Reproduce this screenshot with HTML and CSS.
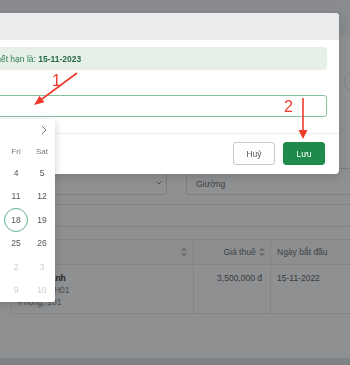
FILE: index.html
```html
<!DOCTYPE html>
<html lang="vi">
<head>
    <meta charset="UTF-8">
    <meta name="viewport" content="width=device-width, initial-scale=1.0">
    <title>Gia hạn hợp đồng</title>
    <link rel="stylesheet" href="styles.css">
</head>
<body>
    <div class="page">
        <header class="topbar"></header>

        <section class="page-head">
            <span class="round-btn"></span>
        </section>

        <div class="filters">
            <div class="select">
                <span class="select-value"></span>
                <svg class="caret" width="6" height="4" viewBox="0 0 6 4"><path d="M0.5 0.5 L3 3 L5.5 0.5" fill="none" stroke="#8c8c8c" stroke-width="1"/></svg>
            </div>
            <div class="text-input">Giường</div>
        </div>

        <div class="tabs"></div>

        <table class="grid">
            <thead>
                <tr>
                    <th class="col-name"><span class="sorter"><svg width="6" height="10" viewBox="0 0 6 10"><path d="M0 4 L3 0 L6 4 Z M0 6 L3 10 L6 6 Z" fill="#c4c4c4"/></svg></span></th>
                    <th class="col-price">Giá thuê <span class="sorter"><svg width="6" height="10" viewBox="0 0 6 10"><path d="M0 4 L3 0 L6 4 Z M0 6 L3 10 L6 6 Z" fill="#c4c4c4"/></svg></span></th>
                    <th class="col-date">Ngày bắt đầu</th>
                </tr>
            </thead>
            <tbody>
                <tr>
                    <td class="col-name">
                        <div class="guest-name">Trần Thanh</div>
                        <div class="muted">Tòa nhà: H01</div>
                        <div class="muted">Phòng: 101</div>
                    </td>
                    <td class="col-price">3,500,000 đ</td>
                    <td class="col-date">15-11-2022</td>
                </tr>
            </tbody>
        </table>

        <footer class="page-foot"></footer>
    </div>

    <div class="backdrop"></div>

    <div class="modal">
        <div class="modal-header">Gia hạn hợp đồng</div>
        <div class="modal-body">
            <div class="alert">Hợp đồng phòng hiện tại sẽ hết hạn là:&nbsp;<strong>15-11-2023</strong></div>

            <div class="form-item">
                <label class="form-label">Ngày kết thúc mới</label>
                <div class="picker">
                    <div class="date-input"><span class="placeholder">Chọn ngày</span></div>

                    <div class="calendar">
                        <div class="cal-head">
                            <svg width="6" height="10" viewBox="0 0 6 10"><path d="M5 1 L1 5 L5 9" fill="none" stroke="#777" stroke-width="1"/></svg>
                            <span class="cal-title">Tháng 11 2022</span>
                            <svg width="6" height="10" viewBox="0 0 6 10"><path d="M1 1 L5 5 L1 9" fill="none" stroke="#777" stroke-width="1"/></svg>
                        </div>
                        <div class="cal-weekdays">
                            <span>Sun</span><span>Mon</span><span>Tue</span><span>Wed</span><span>Thu</span><span>Fri</span><span>Sat</span>
                        </div>
                        <div class="cal-days" id="calDays"></div>
                    </div>
                </div>
            </div>
        </div>
        <div class="modal-footer">
            <button class="btn">Huỷ</button>
            <button class="btn btn-primary">Lưu</button>
        </div>
    </div>

    <svg class="notes" width="350" height="365" viewBox="0 0 350 365">
        <text x="52" y="86" class="note-num">1</text>
        <line x1="77" y1="73" x2="42" y2="99" stroke="#ef3b2c" stroke-width="1.6"/>
        <polygon points="34,105 44.4,102.2 39.6,95.8" fill="#ef3b2c"/>
        <text x="284" y="112" class="note-num">2</text>
        <line x1="303" y1="98" x2="303" y2="131" stroke="#ef3b2c" stroke-width="1.6"/>
        <polygon points="298.5,130 307.5,130 303,139" fill="#ef3b2c"/>
    </svg>

    <script>
        // November 2022, with the trailing days of October and December
        const days = [];
        [30, 31].forEach(d => days.push({ d, out: true }));
        for (let d = 1; d <= 30; d++) days.push({ d, out: false });
        for (let d = 1; d <= 10; d++) days.push({ d, out: true });

        const grid = document.getElementById('calDays');
        days.forEach(item => {
            const cell = document.createElement('span');
            cell.className = 'day' + (item.out ? ' day-out' : '');
            const num = document.createElement('span');
            num.className = 'day-num' + (!item.out && item.d === 18 ? ' day-selected' : '');
            num.textContent = item.d;
            cell.appendChild(num);
            grid.appendChild(cell);
        });
    </script>
</body>
</html>
```

FILE: styles.css
```css
html, body {
    margin: 0;
    padding: 0;
}
body {
    font-family: "Liberation Sans", Arial, sans-serif;
    font-size: 8.5px;
    color: #333;
    width: 350px;
    height: 365px;
    overflow: hidden;
    background-color: #fff;
}
.page {
    height: 365px;
    display: flex;
    flex-direction: column;
    overflow: hidden;
    background-color: #fdfdfd;
}
.topbar {
    height: 35px;
    flex-shrink: 0;
    background-color: #f4f5f6;
}
.page-head {
    height: 97px;
    padding-top: 36px;
    flex-shrink: 0;
    display: flex;
    justify-content: flex-end;
    align-items: flex-start;
}
.round-btn {
    width: 20px;
    height: 20px;
    margin-right: -16px;
    border-radius: 50%;
    border: 1px solid #e2e2e2;
    background-color: #fff;
}
.filters {
    display: flex;
    gap: 19px;
    padding-left: 11px;
    height: 27px;
    flex-shrink: 0;
}
.select {
    width: 156px;
    box-sizing: border-box;
    border: 1px solid #dcdcdc;
    border-radius: 3px;
    display: flex;
    align-items: center;
    justify-content: space-between;
    padding: 0 4px 0 8px;
}
.caret {
    margin-top: 3px;
}
.text-input {
    flex: 1;
    margin-right: -20px;
    box-sizing: border-box;
    border: 1px solid #dcdcdc;
    border-radius: 3px;
    display: flex;
    align-items: center;
    padding: 4px 0 0 9px;
    color: #707070;
    font-size: 8.5px;
}
.tabs {
    margin-top: 9px;
    height: 21px;
    flex-shrink: 0;
    border-top: 1px solid #e6e6e6;
    border-bottom: 1px solid #e6e6e6;
}
.grid {
    margin-top: 12px;
    margin-left: 11px;
    border-collapse: collapse;
    table-layout: fixed;
    width: 400px;
    flex-shrink: 0;
}
.grid th, .grid td {
    border: 1px solid #e8e8e8;
    padding: 0 6px;
    font-size: 8.5px;
}
.grid th {
    height: 24px;
    font-weight: normal;
    color: #707070;
    background-color: #fafafa;
}
.grid td {
    height: 49px;
    vertical-align: top;
    padding-top: 7px;
    line-height: 12px;
    color: #666;
    box-sizing: border-box;
}
.grid .col-name {
    width: 182px;
    box-sizing: border-box;
    text-align: right;
}
.grid td.col-name {
    text-align: left;
}
.grid .col-price {
    width: 77px;
    box-sizing: border-box;
    text-align: right;
    padding-right: 8px;
}
.grid th.col-price {
    padding-right: 5px;
}
.grid .col-date {
    text-align: left;
}
.sorter {
    display: inline-block;
    vertical-align: middle;
    margin-left: 1px;
}
.sorter svg {
    display: block;
}
.guest-name {
    font-weight: bold;
    color: #3a3a3a;
    padding-left: 2px;
}
.muted {
    color: #8a8a8a;
}
.page-foot {
    margin-top: auto;
    height: 7px;
    flex-shrink: 0;
    background-color: #e2e3e4;
}

/* modal */
.backdrop {
    position: fixed;
    inset: 0;
    background-color: rgba(6, 10, 15, 0.45);
    z-index: 10;
}
.modal {
    position: fixed;
    top: 13px;
    left: -139px;
    width: 478px;
    background-color: #fff;
    border-radius: 4px;
    box-shadow: 0 3px 10px rgba(0, 0, 0, 0.15);
    z-index: 20;
}
.modal-header {
    height: 27px;
    line-height: 27px;
    padding-left: 12px;
    background-color: #ebebeb;
    border-radius: 4px 4px 0 0;
    font-size: 10px;
    font-weight: bold;
    color: #333;
}
.modal-body {
    padding: 7px 12px 16px;
}
.alert {
    height: 23px;
    box-sizing: border-box;
    padding: 0 12px 0 16px;
    display: flex;
    align-items: center;
    background-color: #e6f0e9;
    border-radius: 3px;
    color: #2f7d50;
    white-space: nowrap;
}
.alert strong {
    color: #276b43;
}
.form-item {
    margin-top: 8px;
}
.form-label {
    display: block;
    line-height: 12px;
    margin-bottom: 5px;
    color: #333;
}
.picker {
    position: relative;
}
.date-input {
    height: 22px;
    box-sizing: border-box;
    border: 1px solid #86c49e;
    border-radius: 3px;
    display: flex;
    align-items: center;
    padding-left: 7px;
}
.placeholder {
    color: #b5b5b5;
}
.calendar {
    position: absolute;
    top: 24px;
    left: 0;
    width: 182px;
    background-color: #fff;
    border-radius: 2px;
    box-shadow: 0 2px 8px rgba(0, 0, 0, 0.18);
    z-index: 5;
}
.cal-head {
    height: 22px;
    display: flex;
    align-items: center;
    justify-content: space-between;
    padding: 0 8px;
}
.cal-head svg {
    display: block;
}
.cal-title {
    font-weight: bold;
    color: #333;
}
.cal-weekdays, .cal-days {
    display: grid;
    grid-template-columns: repeat(7, 26px);
}
.cal-weekdays span {
    height: 20px;
    line-height: 22px;
    text-align: center;
    font-size: 8px;
    color: #7a7a7a;
}
.day {
    height: 23.5px;
    display: flex;
    align-items: center;
    justify-content: center;
    color: #555;
}
.day-out {
    color: #c9ced4;
}
.day-num {
    width: 24px;
    height: 24px;
    box-sizing: border-box;
    display: flex;
    align-items: center;
    justify-content: center;
    border-radius: 50%;
}
.day-selected {
    border: 1px solid #56b383;
}
.modal-footer {
    border-top: 1px solid #ececec;
    padding: 8px 14px 9px;
    display: flex;
    justify-content: flex-end;
    gap: 8px;
}
.btn {
    width: 42px;
    height: 23px;
    font-family: "Liberation Sans", Arial, sans-serif;
    font-size: 8.5px;
    color: #555;
    background-color: #fff;
    border: 1px solid #c8c8c8;
    border-radius: 3px;
    padding: 0;
    cursor: pointer;
}
.btn-primary {
    color: #fff;
    background-color: #1f8a4c;
    border-color: #1f8a4c;
}

/* red annotations */
.notes {
    position: fixed;
    top: 0;
    left: 0;
    z-index: 30;
    pointer-events: none;
}
.note-num {
    font-family: "Liberation Sans", Arial, sans-serif;
    font-size: 16px;
    fill: #ef3b2c;
}
```
